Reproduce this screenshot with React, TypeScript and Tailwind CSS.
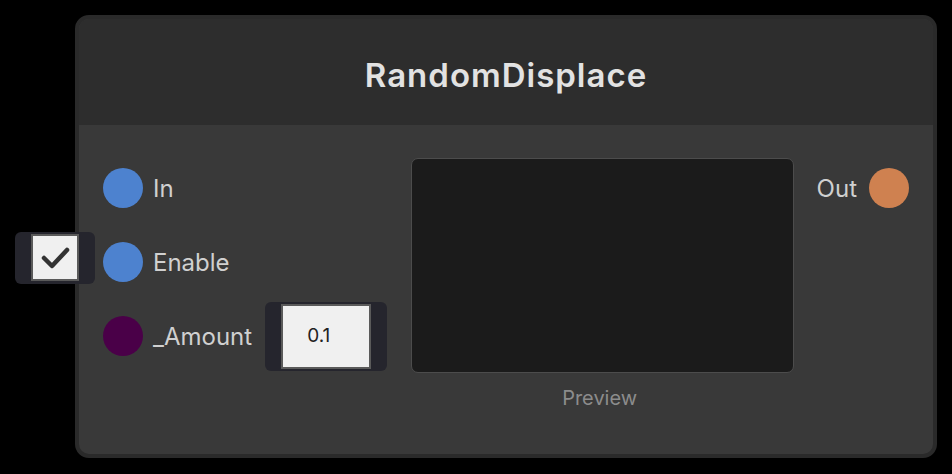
import React from 'react';

const Port: React.FC<{ color: string }> = ({ color }) => (
  <span className="w-[40px] h-[40px] rounded-full shrink-0" style={{ backgroundColor: color }} />
);

export default function App() {
  return (
    <div className="w-[952px] h-[474px] bg-black overflow-hidden" style={{ fontFamily: 'Inter, "Noto Sans", sans-serif' }}>
      <div className="ml-[75px] mt-[15px] w-[862px] h-[443px] rounded-[14px] border-4 border-[#2a2a2a] bg-[#393939] flex flex-col">
        {/* Header */}
        <div className="h-[106px] shrink-0 bg-[#2d2d2d] rounded-t-[10px] flex items-center justify-center">
          <h1 className="text-[33px] font-semibold tracking-[1px] text-[#e2e2e2] mt-[8px]">RandomDisplace</h1>
        </div>

        {/* Body */}
        <div className="flex pl-[24px] pr-[24px]">
          {/* Inputs */}
          <div className="flex flex-col pt-[38px] gap-[24px]">
            <div className="h-[50px] flex items-center gap-[10px]">
              <Port color="#4d82cf" />
              <span className="text-[24px] text-[#d0d0d0] mt-[2px]">In</span>
            </div>
            <div className="h-[50px] flex items-center gap-[10px] relative">
              <div className="absolute left-[-88px] top-[-5px] w-[80px] h-[52px] rounded-[6px] bg-[#25252d] flex justify-center pt-[2px]">
                <div className="w-[48px] h-[47px] bg-[#f0f0f0] border-2 border-[#5a5a5a] flex items-center justify-center">
                  <svg width="32" height="26" viewBox="0 0 32 26">
                    <path d="M5 13 L13 21 L28 5" fill="none" stroke="#333333" strokeWidth="4.5" strokeLinecap="round" strokeLinejoin="round" />
                  </svg>
                </div>
              </div>
              <Port color="#4d82cf" />
              <span className="text-[24px] text-[#d0d0d0] mt-[2px]">Enable</span>
            </div>
            <div className="h-[50px] flex items-center gap-[10px]">
              <Port color="#4a0048" />
              <span className="text-[24px] text-[#d0d0d0] mt-[2px]">_Amount</span>
              <div className="ml-[3px] w-[122px] h-[69px] rounded-[6px] bg-[#25252d] flex justify-center pt-[2px]">
                <div className="w-[90px] h-[65px] bg-[#f0f0f0] border-2 border-[#5a5a5a] flex items-center pl-[24px]">
                  <span className="text-[19px] text-[#222]">0.1</span>
                </div>
              </div>
            </div>
          </div>

          {/* Preview */}
          <div className="ml-[24px] pt-[33px] flex flex-col items-center">
            <div className="w-[383px] h-[215px] rounded-[7px] border border-[#4c4c4c] bg-[#1b1b1b]" />
            <span className="mt-[10px] mr-[6px] text-[20px] text-[#8c8c8c]">Preview</span>
          </div>

          {/* Outputs */}
          <div className="ml-auto pt-[38px]">
            <div className="h-[50px] flex items-center gap-[12px]">
              <span className="text-[24px] text-[#d0d0d0] mt-[2px]">Out</span>
              <Port color="#cf8150" />
            </div>
          </div>
        </div>
      </div>
    </div>
  );
}
